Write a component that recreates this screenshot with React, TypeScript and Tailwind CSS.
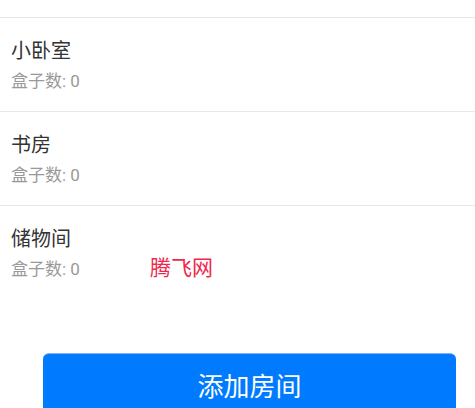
const rooms = [
  { name: "小卧室", boxes: 0 },
  { name: "书房", boxes: 0 },
  { name: "储物间", boxes: 0 },
];

export default function App() {
  return (
    <div
      className="relative h-[408px] w-[475px] overflow-hidden bg-white"
      style={{ fontFamily: 'Roboto, "Noto Sans CJK SC", sans-serif' }}
    >
      {/* tail of the previous row */}
      <div className="h-[18px] border-b border-[#e8e8e8]" />

      {rooms.map((room, i) => (
        <div
          key={room.name}
          className={`px-[11px] py-[19px] ${i < rooms.length - 1 ? "border-b border-[#e8e8e8]" : ""}`}
        >
          <div className="text-[20px] leading-[28px] text-[#333333]">{room.name}</div>
          <div className="mt-[5px] text-[17px] leading-[22px] text-[#999999]">
            盒子数: {room.boxes}
          </div>
        </div>
      ))}

      <div className="absolute left-[150px] top-[254px] text-[21px] leading-[28px] text-[#f0284e]">
        腾飞网
      </div>

      <button className="ml-[43px] mt-[54px] flex h-[68px] w-[413px] items-center justify-center rounded-[6px] border-t border-[#7fb2f0] bg-[#007aff] text-[26px] text-white">
        添加房间
      </button>
    </div>
  );
}
